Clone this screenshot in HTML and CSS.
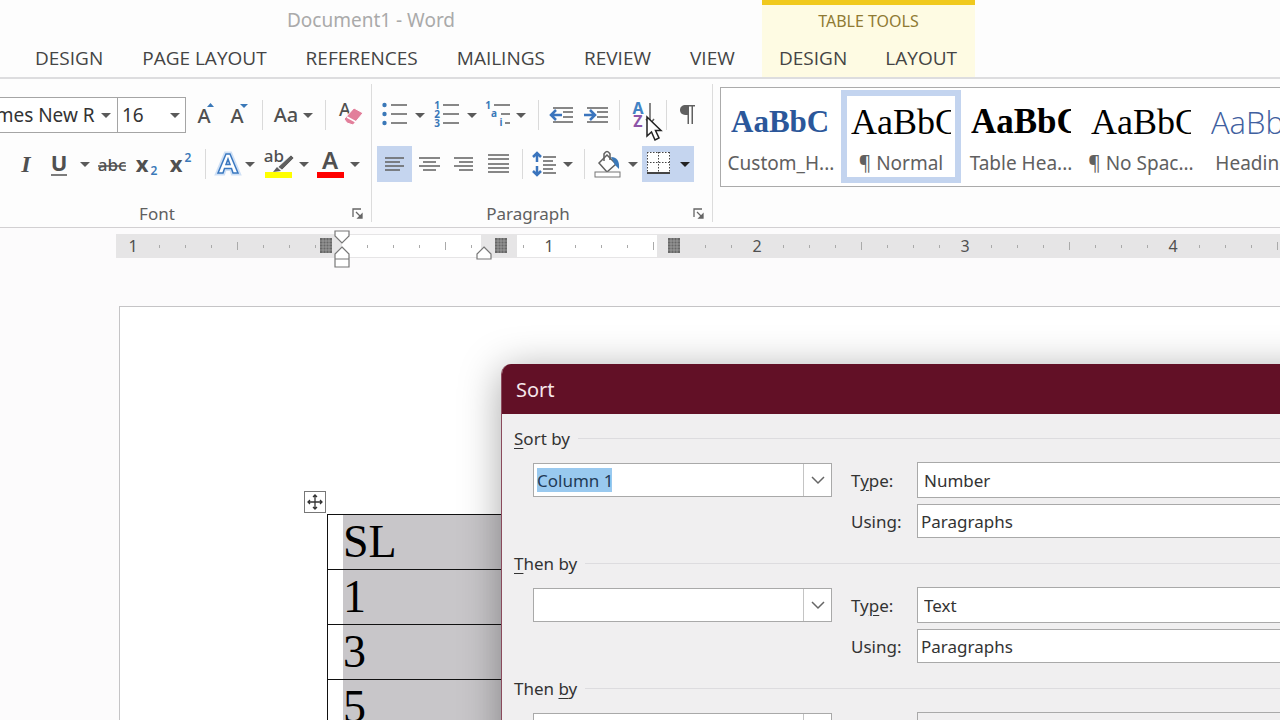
FILE: index.html
```html
<!DOCTYPE html>
<html lang="en">
<head>
<meta charset="utf-8">
<title>Document1 - Word</title>
<link rel="stylesheet" href="styles.css">
</head>
<body>
<svg class="defs" width="0" height="0" aria-hidden="true">
  <defs>
    <path id="caret" d="M-5-2H5L0 3Z" fill="#5a5a5a"/>
    <g id="launcher" fill="none" stroke="#666" stroke-width="1.3"><path d="M1 9V1H9M4 4 9 9"/><path d="M10 6V10H6Z" fill="#666"/></g>
    <g id="stop"><rect width="12" height="15" fill="#686868"/><path d="M3 0V15M6 0V15M9 0V15M0 3H12M0 6H12M0 9H12M0 12H12" stroke="#aaa" stroke-width=".7"/></g>
  </defs>
</svg>

<header class="header">
  <div class="main-head">
    <h1 class="doc-title">Document1 - Word</h1>
    <nav class="tabs">
      <button class="tab">DESIGN</button>
      <button class="tab">PAGE LAYOUT</button>
      <button class="tab">REFERENCES</button>
      <button class="tab">MAILINGS</button>
      <button class="tab">REVIEW</button>
      <button class="tab">VIEW</button>
    </nav>
  </div>
  <div class="context-head">
    <p class="context-title">TABLE TOOLS</p>
    <nav class="context-tabs">
      <button class="tab">DESIGN</button>
      <button class="tab">LAYOUT</button>
    </nav>
  </div>
</header>

<div class="ribbon">
  <section class="group group-font" aria-label="Font">
    <div class="row">
      <button class="combo combo-font" aria-label="Font name"><span class="combo-clip"><span class="combo-text">Times New Roman</span></span><svg width="22" height="36"><use href="#caret" x="11" y="18"/></svg></button>
      <button class="combo combo-size" aria-label="Font size"><span class="combo-text">16</span><svg width="22" height="36"><use href="#caret" x="12" y="18"/></svg></button>
      <button class="tool grow" aria-label="Grow font"><svg width="32" height="36"><text x="14" y="26" class="g g-20">A</text><path d="M17 10H24L20.500 6Z" fill="#3a78b8"/></svg></button>
      <button class="tool" aria-label="Shrink font"><svg width="32" height="36"><text x="15" y="26" class="g g-20">A</text><path d="M18 7H26L22 11Z" fill="#3a78b8"/></svg></button>
      <i class="sep"></i>
      <button class="tool" aria-label="Change case"><svg width="47" height="36"><text x="16" y="25" class="g g-20">Aa</text><use href="#caret" x="38" y="18"/></svg></button>
      <i class="sep"></i>
      <button class="tool" aria-label="Clear formatting"><svg width="34" height="36"><text x="12" y="19" class="g g-18">A</text><path d="M11 22 21 11 30 16 20 28 14 26Z" fill="#e27f9b" stroke="#fff"/><path d="M14 20 23 25" stroke="#fff" stroke-width="1.500"/></svg></button>
    </div>
    <div class="row">
      <button class="tool italic" aria-label="Italic"><svg width="32" height="36"><text x="16" y="26" class="g g-serif">I</text></svg></button>
      <button class="tool" aria-label="Underline"><svg width="54" height="36"><text x="17" y="25" class="g g-bold">U</text><path d="M9 29H25" stroke="#505050" stroke-width="1.500"/><use href="#caret" x="43" y="18"/></svg></button>
      <button class="tool" aria-label="Strikethrough"><svg width="34" height="36"><text x="16" y="25" class="g g-17">abc</text><path d="M2 20H30" stroke="#505050" stroke-width="1.500"/></svg></button>
      <button class="tool" aria-label="Subscript"><svg width="34" height="36"><text x="12" y="26" class="g g-bold">x</text><text x="24" y="29" class="g g-small">2</text></svg></button>
      <button class="tool" aria-label="Superscript"><svg width="33" height="36"><text x="12" y="26" class="g g-bold">x</text><text x="24" y="16" class="g g-small">2</text></svg></button>
      <i class="sep"></i>
      <button class="tool" aria-label="Text effects"><svg width="48" height="36"><path d="M5 27 13 8H17L25 27H20L18.500 22.500H11.500L10 27ZM13 18.500H17L15 13Z" fill="#fff" stroke="#cfe0f5" stroke-width="5"/><path d="M5 27 13 8H17L25 27H20L18.500 22.500H11.500L10 27ZM13 18.500H17L15 13Z" fill="#fff" stroke="#3a78c0" stroke-width="1.500"/><use href="#caret" x="37" y="18"/></svg></button>
      <button class="tool" aria-label="Highlight colour"><svg width="52" height="36"><text x="13" y="16" class="g g-17">ab</text><path d="M30 9 33 12 21 24 17 21Z" fill="#606060" stroke="#fff" stroke-width=".7"/><path d="M16 21 20 25 12 26Z" fill="#606060"/><rect x="4" y="26" width="27" height="6" fill="#ff0"/><use href="#caret" x="43" y="18"/></svg></button>
      <button class="tool" aria-label="Font colour"><svg width="52" height="36"><text x="17" y="23" class="g g-22">A</text><rect x="4" y="26" width="27" height="6" fill="#f00"/><use href="#caret" x="42" y="18"/></svg></button>
    </div>
    <div class="group-foot"><span>Font</span><button class="tool launch" aria-label="Font settings"><svg width="12" height="12"><use href="#launcher"/></svg></button></div>
  </section>

  <section class="group group-para" aria-label="Paragraph">
    <div class="row">
      <button class="tool" aria-label="Bullets"><svg width="52" height="36"><g fill="#3a78b8"><circle cx="7.500" cy="8" r="2.200"/><circle cx="7.500" cy="17" r="2.200"/><circle cx="7.500" cy="26" r="2.200"/></g><path d="M14 8H30M14 17H30M14 26H30" class="s"/><use href="#caret" x="43" y="18"/></svg></button>
      <button class="tool" aria-label="Numbering"><svg width="52" height="36"><text x="8" y="12" class="g g-num">1</text><text x="8" y="21" class="g g-num">2</text><text x="8" y="30" class="g g-num">3</text><path d="M14 8H30M14 17H30M14 26H30" class="s"/><use href="#caret" x="43" y="18"/></svg></button>
      <button class="tool" aria-label="Multilevel list"><svg width="49" height="36"><text x="7" y="12" class="g g-num">1</text><text x="13" y="20" class="g g-num">a</text><text x="20" y="29" class="g g-num">i</text><path d="M13 8H29M20 17H29M24 26H29" class="s"/><use href="#caret" x="40" y="18"/></svg></button>
      <i class="sep"></i>
      <button class="tool" aria-label="Decrease indent"><svg width="34" height="36"><path d="M7 11H27M17 15H27M17 20H27M7 25H27" class="s"/><path d="M16 18H5M10 13 5 18 10 23" class="b"/></svg></button>
      <button class="tool" aria-label="Increase indent"><svg width="34" height="36"><path d="M7 11H28M17 15H28M17 20H28M7 25H28" class="s"/><path d="M4 18H14M10 13 15 18 10 23" class="b"/></svg></button>
      <i class="sep sep-near"></i>
      <button class="tool" aria-label="Sort"><svg width="34" height="36"><text x="11" y="17" class="g g-sort-a">A</text><text x="11" y="30" class="g g-sort-z">Z</text><path d="M23 6V26M19 22 23 27 27 22" class="s"/></svg></button>
      <i class="sep sep-near"></i>
      <button class="tool" aria-label="Show paragraph marks"><svg width="34" height="36"><path d="M12 8H21V9.500H19V27H17.500V9.500H15V27H13.500V18C8 18 6 16 6 13S8 8 12 8Z" fill="#606060"/></svg></button>
    </div>
    <div class="row">
      <button class="tool on" aria-label="Align left" aria-pressed="true"><svg width="35" height="36"><path d="M8 12H27M8 16H23M8 20H27M8 24H23" class="s"/></svg></button>
      <button class="tool" aria-label="Centre"><svg width="35" height="36"><path d="M7 12H28M11 16H24M7 20H28M11 24H24" class="s"/></svg></button>
      <button class="tool" aria-label="Align right"><svg width="35" height="36"><path d="M7 12H26M12 16H26M7 20H26M12 24H26" class="s"/></svg></button>
      <button class="tool" aria-label="Justify"><svg width="35" height="36"><path d="M6 9H27M6 13H27M6 18H27M6 22H27M6 26H27" class="s"/></svg></button>
      <i class="sep sep-near"></i>
      <button class="tool" aria-label="Line spacing"><svg width="49" height="36"><path d="M7 7V16M7 20V29M3 11 7 7 11 11M3 25 7 29 11 25" class="b"/><path d="M13 11H26M13 15H23M13 19H26M13 23H23M13 27H26" class="s"/><use href="#caret" x="38" y="18"/></svg></button>
      <i class="sep sep-near"></i>
      <button class="tool" aria-label="Shading"><svg width="50" height="36"><path d="M7 17 15 9 24 18 15 26Z" fill="#fff" stroke="#606060" stroke-width="1.500"/><path d="M12 15V8Q15 3 18 8V14" fill="none" stroke="#606060" stroke-width="1.500"/><path d="M19 11Q28 11 27 23L23 19Z" fill="#3a78b8"/><rect x="3" y="26" width="25" height="5" fill="#fff" stroke="#777"/><use href="#caret" x="41" y="18"/></svg></button>
      <button class="tool on" aria-label="Borders" aria-pressed="true"><svg width="52" height="36"><rect x="5" y="6" width="23" height="21" fill="#fff"/><path d="M5 6.500H28M5 16.500H28M5.500 6V27M16.500 6V27M27.500 6V27" stroke="#444" stroke-dasharray="1.500 1.500"/><path d="M5 27H28" stroke="#444" stroke-width="2"/><path d="M38 16H48L43 21Z" fill="#222"/></svg></button>
    </div>
    <div class="group-foot"><span>Paragraph</span><button class="tool launch" aria-label="Paragraph settings"><svg width="12" height="12"><use href="#launcher"/></svg></button></div>
  </section>

  <section class="gallery" aria-label="Styles">
    <button class="style"><span class="sample sample-custom">AaBbC</span><span class="style-name">Custom_H...</span></button>
    <button class="style selected"><span class="sample">AaBbC</span><span class="style-name">¶ Normal</span></button>
    <button class="style"><span class="sample sample-bold">AaBbC</span><span class="style-name">Table Hea...</span></button>
    <button class="style"><span class="sample">AaBbC</span><span class="style-name">¶ No Spac...</span></button>
    <button class="style"><span class="sample sample-heading">AaBbC</span><span class="style-name">Heading 1</span></button>
  </section>
</div>

<main class="workspace">
  <div class="ruler">
    <svg width="100%" height="36" aria-label="Ruler">
      <defs><pattern id="ticks" x="17" width="208" height="36" patternUnits="userSpaceOnUse"><path d="M26.500 16V19M52.500 16V19M78.500 16V19M130.500 16V19M156.500 16V19M182.500 16V19M104.500 13V21" stroke="#aaa"/></pattern></defs>
      <rect y="5" width="100%" height="24" fill="#e6e5e6"/>
      <rect x="226" y="6" width="139" height="22" fill="#fff"/>
      <rect x="401" y="6" width="140" height="22" fill="#fff"/>
      <rect width="100%" height="36" fill="url(#ticks)"/>
      <rect x="366" y="10" width="34" height="14" fill="#e6e5e6"/>
      <rect x="546" y="10" width="24" height="14" fill="#e6e5e6"/>
      <g class="ruler-num"><text x="17" y="23">1</text><text x="433" y="23">1</text><text x="641" y="23">2</text><text x="849" y="23">3</text><text x="1057" y="23">4</text></g>
      <use href="#stop" x="204" y="9"/><use href="#stop" x="379" y="9"/><use href="#stop" x="552" y="9"/>
      <g fill="#fff" stroke="#777" stroke-width="1.200"><path d="M219 2H233V7L226 14 219 7Z"/><path d="M226 18 233 25V38H219V25ZM219 30H233"/><path d="M368 18 375 25V30H361V25Z"/></g>
    </svg>
  </div>
  <div class="page">
    <div class="table-wrap">
      <button class="handle" aria-label="Move table"><svg width="20" height="20"><path d="M10 3V17M3 10H17M8 5 10 3 12 5M8 15 10 17 12 15M5 8 3 10 5 12M15 8 17 10 15 12" fill="none" stroke="#333" stroke-width="1.300"/></svg></button>
      <table class="doc-table">
        <tr><td><span>SL</span></td></tr>
        <tr><td><span>1</span></td></tr>
        <tr><td><span>3</span></td></tr>
        <tr><td><span>5</span></td></tr>
      </table>
    </div>
  </div>

  <section class="dialog" role="dialog" aria-labelledby="sort-title">
    <h2 class="dialog-title" id="sort-title">Sort</h2>
    <form class="dialog-body">
      <div class="sort-group">
        <div class="group-title"><label for="by1"><u>S</u>ort by</label></div>
        <div class="fields">
          <div class="box"><div class="box-in"><input id="by1" class="chosen" value="Column 1"></div><button type="button" aria-label="Open list"><svg width="16" height="10"><path d="M2 2 8 8 14 2" class="chev"/></svg></button></div>
          <label for="type1">T<u>y</u>pe:</label>
          <select id="type1" class="type"><option>Number</option></select>
          <label for="using1" class="using-label">Using:</label>
          <select id="using1" class="using"><option>Paragraphs</option></select>
        </div>
      </div>
      <div class="sort-group">
        <div class="group-title"><label for="by2"><u>T</u>hen by</label></div>
        <div class="fields">
          <div class="box"><div class="box-in"><input id="by2"></div><button type="button" aria-label="Open list"><svg width="16" height="10"><path d="M2 2 8 8 14 2" class="chev"/></svg></button></div>
          <label for="type2">Ty<u>p</u>e:</label>
          <select id="type2" class="type"><option>Text</option></select>
          <label for="using2" class="using-label">Using:</label>
          <select id="using2" class="using"><option>Paragraphs</option></select>
        </div>
      </div>
      <div class="sort-group">
        <div class="group-title"><label for="by3">Then <u>b</u>y</label></div>
        <div class="fields">
          <div class="box"><div class="box-in"><input id="by3"></div><button type="button" aria-label="Open list"><svg width="16" height="10"><path d="M2 2 8 8 14 2" class="chev"/></svg></button></div>
          <label for="type3">Type:</label>
          <select id="type3" class="type off"><option>Text</option></select>
        </div>
      </div>
    </form>
  </section>
</main>
<svg class="pointer" width="18" height="28" aria-hidden="true"><path d="M2 2V21L6.500 17 10 25 14 23 10.500 15.500H16Z" fill="#fff" stroke="#222" stroke-width="1.500"/></svg>
</body>
</html>
```

FILE: styles.css
```css
* { box-sizing: border-box; }
body { margin: 0; height: 100vh; overflow: hidden; display: flex; flex-direction: column; background: #fdfdfd; color: #444; font-family: "Noto Sans", "Open Sans", sans-serif; position: relative; }
button { border: 0; padding: 0; background: none; color: inherit; font: inherit; }
svg { display: block; }
h1, h2, p { margin: 0; font-weight: 400; }
.defs { position: absolute; }

.header { display: flex; height: 79px; border-bottom: 2px solid #dddddf; flex: none; }
.main-head { width: 762px; flex: none; }
.doc-title { padding: 6px 20px 0 0; height: 40px; font-size: 19px; line-height: 28px; color: #aaa; text-align: center; }
.tabs { display: flex; gap: 39px; padding-left: 35px; }
.tab { font-size: 19px; line-height: 36px; font-family: "Open Sans", sans-serif; }
.context-head { width: 213px; flex: none; background: #fefbe3; border-top: 5px solid #f0c91e; }
.context-title { height: 35px; padding-top: 3px; font-size: 16px; line-height: 26px; text-align: center; color: #8f7a33; }
.context-tabs { display: flex; justify-content: space-between; padding: 0 18px 0 17px; }

.ribbon { display: flex; flex: none; height: 149px; padding-top: 5px; border-bottom: 1px solid #d2d0d2; }
.group { display: flex; flex-direction: column; height: 138px; padding-top: 6px; border-right: 1px solid #dcdcdc; flex: none; }
.group-font { width: 372px; }
.group-para { width: 341px; padding-left: 5px; }
.row { display: flex; align-items: center; height: 49px; flex: none; }
.row .tool { flex: none; }
.sep { width: 1px; height: 30px; margin: 0 7px 0 8px; background: #dadada; flex: none; }
.sep-near { margin-left: 5px; }
.combo { display: flex; align-items: center; justify-content: space-between; height: 36px; border: 1px solid #a5a5a5; background: #fff; color: #333; flex: none; }
.combo-font { width: 118px; border-left: 0; }
.combo-size { width: 69px; margin-left: -1px; padding-left: 4px; }
.combo-clip { display: flex; justify-content: flex-end; width: 96px; overflow: hidden; }
.combo-font .combo-text { width: 115px; flex: none; overflow: hidden; white-space: nowrap; text-align: left; }
.combo-text { font-size: 19px; line-height: 28px; }
.grow { margin-left: 4px; }
.italic { margin-left: 10px; }
.g { font-family: "Noto Sans", sans-serif; fill: #505050; text-anchor: middle; }
.g-17 { font-size: 17px; font-weight: 500; }
.g-18 { font-size: 18px; font-weight: 500; }
.g-20 { font-size: 20px; font-weight: 500; }
.g-22 { font-size: 24px; font-weight: 600; }
.g-bold { font-size: 22px; font-weight: 700; }
.g-serif { font-family: "Liberation Serif", serif; font-size: 24px; font-style: italic; font-weight: 700; }
.g-small { font-size: 12px; fill: #3a78b8; font-weight: 600; }
.g-num { font-size: 10px; font-weight: 700; fill: #3a78b8; }
.g-sort-a { font-size: 16px; font-weight: 700; fill: #4283c4; }
.g-sort-z { font-size: 16px; font-weight: 700; fill: #8d55a8; }
.s { fill: none; stroke: #606060; stroke-width: 1.5; }
.b { fill: none; stroke: #3a74bd; stroke-width: 2.5; }
.on { background: #c5d5ef; }
.group-foot { display: flex; align-items: center; justify-content: center; flex: 1; padding: 18px 0 0 8px; font-size: 17px; line-height: 16px; color: #606060; }
.group-foot span { flex: 1; text-align: center; padding-right: 44px; }
.group-font .group-foot span { padding-right: 68px; }
.group-foot .launch { margin: 0 7px 0 -22px; }

.gallery { display: flex; flex: 1; margin: 3px 0 0 7px; height: 100px; border: 1px solid #ababab; border-right: 0; background: #fff; overflow: hidden; padding: 2px 0; }
.style { display: flex; flex-direction: column; align-items: center; width: 120px; height: 93px; border: 6px solid transparent; flex: none; }
.selected { border-color: #c3d4ef; }
.sample { width: 100px; height: 53px; overflow: hidden; white-space: nowrap; text-align: left; font-family: "Liberation Serif", serif; font-size: 36px; line-height: 52px; color: #000; }
.sample-custom { font-size: 31px; font-weight: 700; color: #2b579a; }
.sample-bold { font-size: 35px; font-weight: 700; }
.sample-heading { font-family: "Open Sans", sans-serif; font-weight: 300; font-size: 31px; color: #3f60a0; }
.style-name { font-size: 19px; line-height: 28px; color: #606060; white-space: nowrap; }

.workspace { position: relative; flex: 1; overflow: hidden; display: flex; flex-direction: column; background: #fcfbfc; }
.ruler { padding: 1px 0 0 116px; height: 78px; flex: none; }
.ruler svg { overflow: visible; }
.ruler-num { font-family: "Noto Sans", sans-serif; font-size: 16px; fill: #505050; text-anchor: middle; }
.page { flex: 1; margin-left: 119px; border: 1px solid #c5c4c6; border-width: 1px 0 0 1px; background: #fff; padding: 207px 0 0 207px; }
.table-wrap { position: relative; }
.handle { position: absolute; left: -23px; top: -23px; border: 1px solid #777; background: #fff; }
.doc-table { width: 100%; border-collapse: collapse; font-family: "Liberation Serif", serif; font-size: 46px; line-height: 54px; color: #000; }
.doc-table td { border: 1px solid #111; padding: 0 0 0 15px; }
.doc-table span { display: block; height: 54px; background: #c8c6c9; }

.dialog { position: absolute; left: 501px; right: -80px; top: 136px; bottom: -60px; overflow: hidden; border: 1px solid #8a4a5c; border-top: 0; border-radius: 10px 10px 0 0; background: #f0eff0; box-shadow: 0 6px 40px rgba(0, 0, 0, .35); color: #333; font-size: 17px; }
.dialog-title { height: 50px; padding-left: 14px; background: #621026; color: #f5e6ea; font-size: 20px; line-height: 52px; }
.dialog-body { padding: 11px 0 0 12px; }
.sort-group { height: 125px; }
.sort-group u { text-underline-offset: 3px; }
.group-title { display: flex; align-items: center; gap: 8px; height: 26px; }
.group-title::after { content: ""; flex: 1; height: 1px; background: #dddcdf; }
.fields { display: grid; grid-template-columns: 299px 47px 1fr; column-gap: 19px; row-gap: 6px; padding: 11px 0 0 19px; align-items: center; }
.box { display: flex; height: 34px; border: 1px solid #a9a9a9; background: #fff; }
.box-in { flex: 1; display: flex; align-items: center; padding-left: 3px; }
.box input { width: 100%; height: 24px; border: 0; padding: 0; outline: 0; background: none; color: #333; font: inherit; }
.box .chosen { width: 75px; background: #99c9ef; color: #1f3a56; }
.box button { display: flex; align-items: center; justify-content: center; width: 28px; border-left: 1px solid #c4c4c4; }
.chev { fill: none; stroke: #666; stroke-width: 1.5; }
select { appearance: none; width: 100%; border: 1px solid #a9a9a9; border-radius: 0; background: #fff; color: #333; font: inherit; }
.type { height: 36px; padding: 0 6px; }
.using { height: 34px; padding: 0 3px; }
.using-label { grid-column: 2; }
.off { background: #f0eff0; }
.pointer { position: absolute; left: 645px; top: 115px; }
```
